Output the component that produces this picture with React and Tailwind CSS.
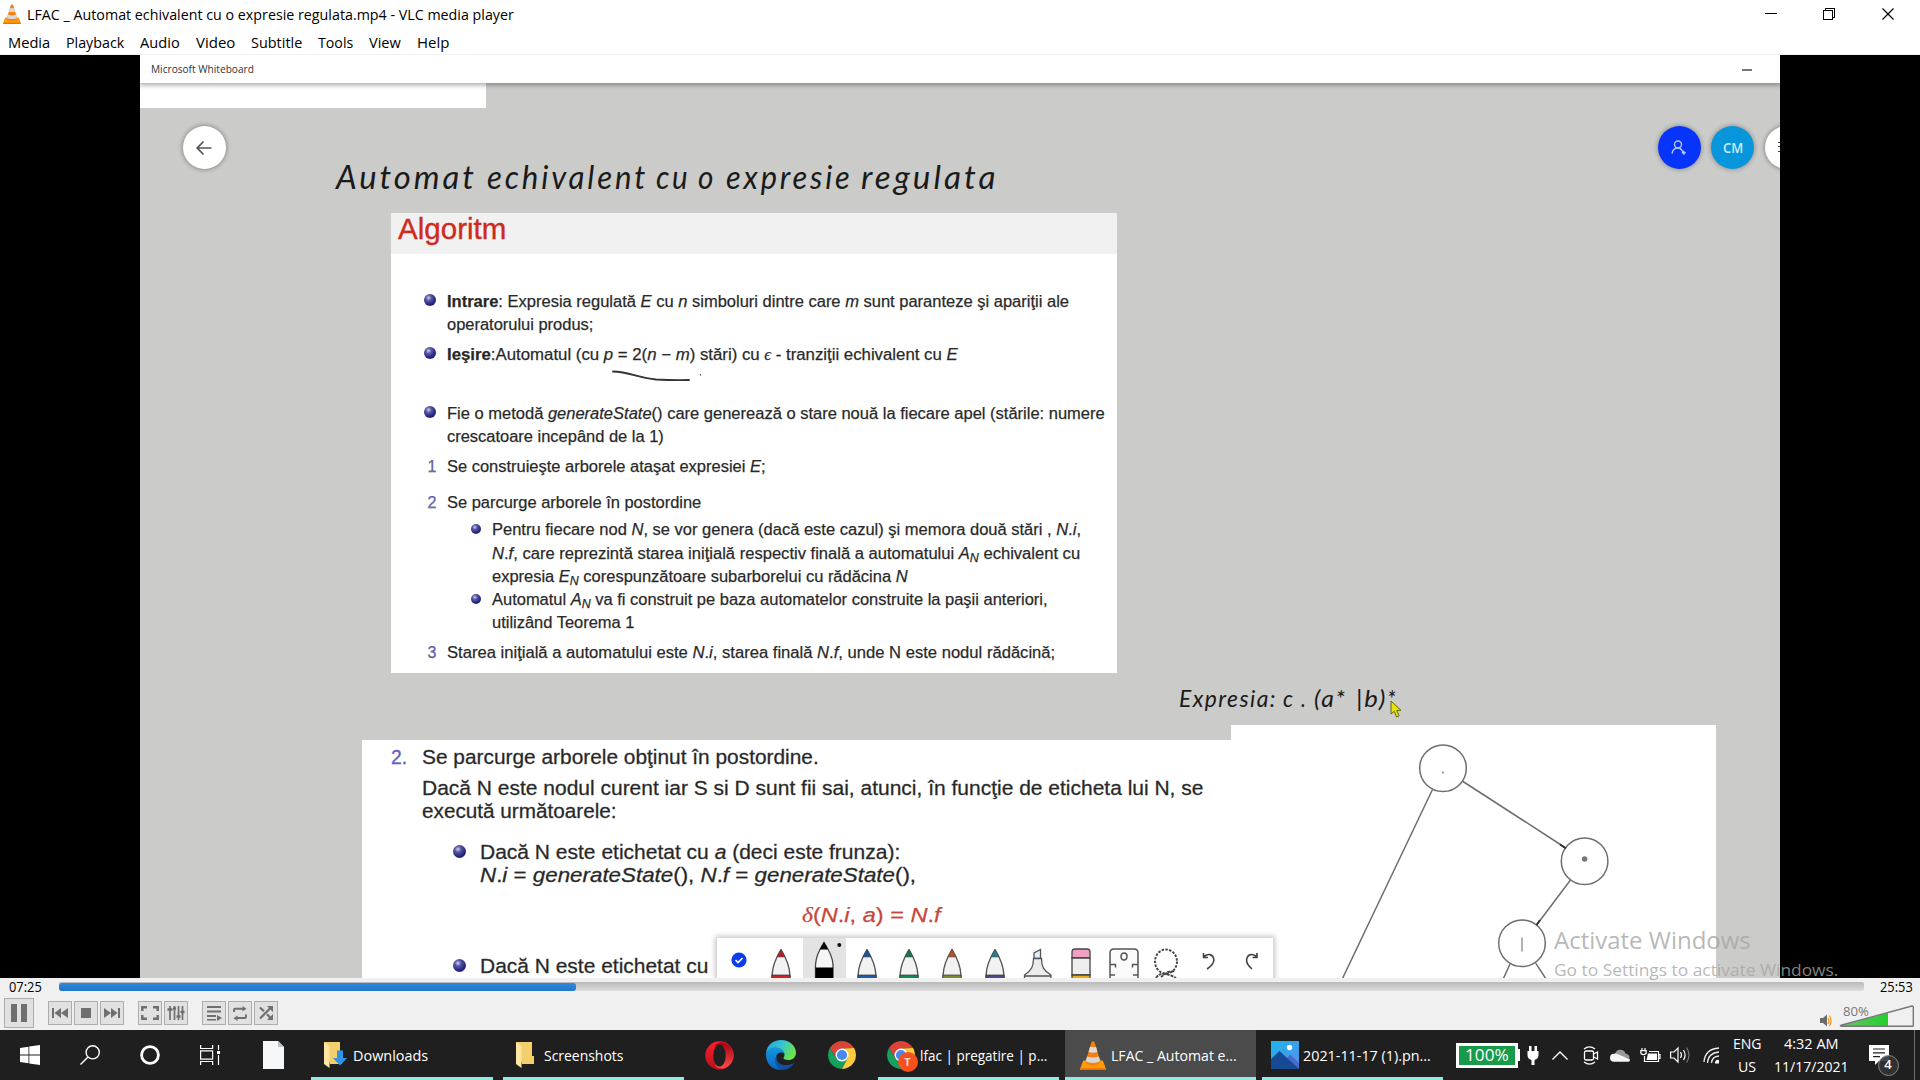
import React, { useLayoutEffect, useRef, useState } from "react";

/* Text on one line, condensed or widened so that it fills exactly w pixels. */
function Fit({ w, className = "", children }) {
  const ref = useRef(null);
  const [k, setK] = useState(1);
  useLayoutEffect(() => {
    if (ref.current) setK(w / ref.current.offsetWidth);
  }, [w]);
  return (
    <span className={"block shrink-0 whitespace-nowrap " + className} style={{ width: w }}>
      <span ref={ref} className="inline-block origin-left" style={{ transform: `scaleX(${k})` }}>
        {children}
      </span>
    </span>
  );
}

function Cone({ className }) {
  return (
    <svg viewBox="0 0 26 29" className={className} preserveAspectRatio="none">
      <path d="M3.2 19.5h19.6L26 28a1 1 0 0 1-1 1H1a1 1 0 0 1-1-1z" fill="#ff9a0a" />
      <path d="M0 27.2h26V28a1 1 0 0 1-1 1H1a1 1 0 0 1-1-1z" fill="#e87400" />
      <path d="M5.4 21 11.4 1.4Q13-.8 14.6 1.4L20.6 21q-3 3.4-7.6 3.4T5.4 21z" fill="#f57f10" />
      <path d="M10 6h6l1.500 5q-4.500 1.600-9 0z" fill="#dcdcdc" />
      <path d="M7.1 15.400q5.900 2.200 11.800 0l1.400 4.800q-7.300 3.400-14.600 0z" fill="#d8d8d8" />
    </svg>
  );
}

const menus = [
  ["Media", 42, 16],
  ["Playback", 58, 16],
  ["Audio", 40, 16],
  ["Video", 39, 16],
  ["Subtitle", 51, 16],
  ["Tools", 35, 16],
  ["View", 32, 16],
  ["Help", 32, 0],
];

function TitleBar() {
  return (
    <header className="h-[55px] shrink-0 border-b border-[#f0f0f0] bg-white font-['Open_Sans',sans-serif] text-[15px] text-black">
      <div className="flex h-[30px] items-start">
        <Cone className="ml-[3px] mt-[4px] h-[20px] w-[18px]" />
        <Fit w={487} className="ml-[6px] leading-[29px]">LFAC _ Automat echivalent cu o expresie regulata.mp4 - VLC media player</Fit>
        <div className="ml-auto flex pt-[7px]">
          <svg width="130" height="14" viewBox="0 0 130 14" fill="none" stroke="#000" shapeRendering="crispEdges">
            <path d="M0 6.500h12" />
            <path d="M58.500 3.500h9v9h-9zM60.500 3.500v-2h9v9h-2" />
            <path d="m117.500 1.500 11 11m0-11-11 11" shapeRendering="auto" strokeWidth="1.200" />
          </svg>
          <div className="w-[25px]" />
        </div>
      </div>
      <nav className="flex pl-[8px] leading-[25px]">
        {menus.map(([t, w, g]) => (
          <div key={t} className="flex">
            <Fit w={w}>{t}</Fit>
            <div style={{ width: g }} />
          </div>
        ))}
      </nav>
    </header>
  );
}

function Bullet({ small }) {
  return (
    <span
      className={
        (small ? "h-[10px] w-[10px] ml-[80px] mr-[11px] mt-[6px] " : "h-[12px] w-[12px] ml-[33px] mr-[11px] mt-[4px] ") +
        "block shrink-0 rounded-full bg-[radial-gradient(circle_at_38%_32%,#d0d0f0_0%,#5a5aa8_25%,#26267e_60%,#1b1b66_100%)]"
      }
    />
  );
}

function Num({ children }) {
  return <span className="ml-[36.500px] block w-[19.500px] shrink-0 text-[16px] text-[#6a6ad0]">{children}</span>;
}

function Sub({ children }) {
  return <span className="relative top-[3px] text-[12px] italic leading-[0px]">{children}</span>;
}

function AlgorithmSlide() {
  return (
    <section className="absolute left-[251px] top-[158px] h-[460px] w-[726px] bg-white font-['Liberation_Sans',sans-serif] text-[16px] leading-[23px] text-[#262626] [-webkit-text-stroke:0.25px_#3a3a3a]">
      <div className="h-[41px] bg-[#f1f1f1] pl-[7px] text-[29px] leading-[32px] text-[#cf2a1d] [-webkit-text-stroke:0.35px_#cf2a1d]">
        <Fit w={108}>Algoritm</Fit>
      </div>
      <div className="mt-[35.500px] flex">
        <Bullet />
        <Fit w={622}><b>Intrare</b>: Expresia regulată <i>E</i> cu <i>n</i> simboluri dintre care <i>m</i> sunt paranteze şi apariţii ale</Fit>
      </div>
      <Fit w={146} className="ml-[56px]">operatorului produs;</Fit>
      <div className="mt-[7px] flex">
        <Bullet />
        <Fit w={511}><b>Ieşire</b>:Automatul (cu <i>p</i> = 2(<i>n</i> − <i>m</i>) stări) cu <i className="font-['Liberation_Serif',serif]">ϵ</i> - tranziţii echivalent cu <i>E</i></Fit>
      </div>
      <div className="mt-[36.500px] flex">
        <Bullet />
        <Fit w={658}>Fie o metodă <i>generateState</i>() care generează o stare nouă la fiecare apel (stările: numere</Fit>
      </div>
      <Fit w={217} className="ml-[56px]">crescatoare incepând de la 1)</Fit>
      <div className="mt-[7px] flex"><Num>1</Num><Fit w={319}>Se construieşte arborele ataşat expresiei <i>E</i>;</Fit></div>
      <div className="mt-[13px] flex"><Num>2</Num><Fit w={254}>Se parcurge arborele în postordine</Fit></div>
      <div className="mt-[3.500px] flex h-[24px]">
        <Bullet small />
        <Fit w={589}>Pentru fiecare nod <i>N</i>, se vor genera (dacă este cazul) şi memora două stări , <i>N</i>.<i>i</i>,</Fit>
      </div>
      <Fit w={588} className="ml-[101px] h-[23.500px]"><i>N</i>.<i>f</i>, care reprezintă starea iniţială respectiv finală a automatului <i>A</i><Sub>N</Sub> echivalent cu</Fit>
      <Fit w={416} className="ml-[101px] h-[23px]">expresia <i>E</i><Sub>N</Sub> corespunzătoare subarborelui cu rădăcina <i>N</i></Fit>
      <div className="flex h-[23px]">
        <Bullet small />
        <Fit w={556}>Automatul <i>A</i><Sub>N</Sub> va fi construit pe baza automatelor construite la paşii anteriori,</Fit>
      </div>
      <Fit w={142} className="ml-[101px]">utilizând Teorema 1</Fit>
      <div className="mt-[7px] flex"><Num>3</Num><Fit w={608}>Starea iniţială a automatului este <i>N</i>.<i>i</i>, starea finală <i>N</i>.<i>f</i>, unde N este nodul rădăcină;</Fit></div>
    </section>
  );
}

function BigBullet() {
  return (
    <span className="ml-[91px] mr-[14px] mt-[5px] block h-[13px] w-[13px] shrink-0 rounded-full bg-[radial-gradient(circle_at_38%_32%,#d0d0f0_0%,#5a5aa8_25%,#26267e_60%,#1b1b66_100%)]" />
  );
}

function PostorderSlide() {
  return (
    <section className="absolute left-[221.500px] top-[685px] h-[238px] w-[870px] overflow-hidden bg-white pt-[5px] font-['Liberation_Sans',sans-serif] text-[20.500px] leading-[23px] text-[#262626] [-webkit-text-stroke:0.3px_#3a3a3a]">
      <div className="flex">
        <Fit w={16} className="ml-[29.500px] text-[#5c5ccb] [-webkit-text-stroke:0.3px_#5c5ccb]">2.</Fit>
        <Fit w={397} className="ml-[15px]">Se parcurge arborele obţinut în postordine.</Fit>
      </div>
      <Fit w={781} className="ml-[60.500px] mt-[7.500px]">Dacă N este nodul curent iar S si D sunt fii sai, atunci, în funcţie de eticheta lui N, se</Fit>
      <Fit w={195} className="ml-[60.500px]">execută următoarele:</Fit>
      <div className="mt-[18px] flex">
        <BigBullet />
        <Fit w={420}>Dacă N este etichetat cu <i>a</i> (deci este frunza):</Fit>
      </div>
      <Fit w={436} className="ml-[118px]"><i>N</i>.<i>i</i> = <i>generateState</i>(), <i>N</i>.<i>f</i> = <i>generateState</i>(),</Fit>
      <Fit w={139} className="ml-[440px] mt-[17.500px] text-[#c8463a] [-webkit-text-stroke:0.25px_#c8463a]"><i className="font-['Liberation_Serif',serif]">δ</i>(<i>N</i>.<i>i</i>, <i>a</i>) = <i>N</i>.<i>f</i></Fit>
      <div className="mt-[27px] flex">
        <BigBullet />
        <Fit w={228}>Dacă N este etichetat cu</Fit>
      </div>
    </section>
  );
}

function TreeSlide() {
  return (
    <section className="absolute left-[1091px] top-[669.500px] h-[254px] w-[485px] overflow-hidden bg-white">
      <svg width="485" height="254" viewBox="1231 724.500 485 254" fill="none" stroke="#6e6e6e" strokeWidth="1.500">
        <circle cx="1443" cy="767.700" r="23.300" />
        <circle cx="1584.600" cy="860.700" r="23.300" />
        <circle cx="1522" cy="942.700" r="23.300" />
        <path d="M1432.500 789 1342 979M1463 781l102 66M1570.500 879.500 1537 924M1510 963.500l-7 15.500M1535.700 962.700l10.500 16" />
        <path d="m1560 844 6 4M1540 919.500l-3.500 5" stroke="#333" strokeWidth="1.900" />
        <path d="M1522 937v14" stroke="#999" />
        <circle cx="1443" cy="772" r="0.900" fill="#777" stroke="none" />
        <circle cx="1584.600" cy="858.500" r="2.800" fill="#777" stroke="none" />
      </svg>
    </section>
  );
}

function Pen({ tip, band }) {
  return (
    <svg width="20" height="30" viewBox="0 0 20 30" className="block">
      <path d="M10 .5C6 7 1.500 15 1 26.500V30h18v-3.500C18.500 15 14 7 10 .5z" fill="#f2f2f2" stroke="#555" strokeWidth="1.400" />
      <path d="M10 .5c-1.400 2.400-2.700 4.800-3.800 7.500h7.600C12.700 5.300 11.400 2.900 10 .5z" fill={tip} stroke="#444" strokeWidth=".5" />
      <path d="M1 26h18v4H1z" fill={band} stroke="#333" strokeWidth=".7" />
    </svg>
  );
}

function InkToolbar() {
  return (
    <div className="absolute left-[577px] top-[883px] flex h-[42px] w-[556px] bg-white pl-[13.500px] shadow-[0_0_5px_2px_rgba(0,0,0,0.22)]">
      <svg width="16" height="16" viewBox="0 0 16 16" className="mt-[14px]">
        <circle cx="8" cy="8" r="7.600" fill="#0b3cf0" />
        <path d="m4.500 8 2.500 2.600L11.500 6" fill="none" stroke="#fff" strokeWidth="1.600" />
      </svg>
      <div className="ml-[24.500px] mt-[11px]"><Pen tip="#b3202a" band="#d02424" /></div>
      <div className="ml-[11.500px] h-full w-[43px] bg-[#e3e3e3]">
        <svg width="43" height="42" viewBox="0 0 43 42">
          <path d="M21 4.500c-4 6-8 14-8.500 22V42h17.500V26.500C29.500 18.500 25 10.500 21 4.500z" fill="#f5f5f5" stroke="#444" strokeWidth="1.300" />
          <path d="M21 4c-1.800 2.600-3 5-4 7.500h8c-1-2.500-2.200-4.900-4-7.500zM12.500 29.500H30V42H12.500z" fill="#000" />
          <circle cx="36.300" cy="7" r="2" fill="#111" />
        </svg>
      </div>
      <div className="ml-[11px] mt-[11px]"><Pen tip="#1c549c" band="#1b5cb0" /></div>
      <div className="ml-[22.500px] mt-[11px]"><Pen tip="#10784a" band="#118a52" /></div>
      <div className="ml-[23px] mt-[11px]"><Pen tip="#b8502c" band="#7a8a2c" /></div>
      <div className="ml-[22.500px] mt-[11px]"><Pen tip="#23808e" band="#4a4a8c" /></div>
      <svg width="30" height="31" viewBox="0 0 30 31" className="ml-[18px] mt-[10px]" fill="#ececec" stroke="#555" strokeWidth="1.300">
        <path d="M11 10.500V5l6.500-3.500v9z" fill="#dff0fa" />
        <path d="M10.500 10.500h8c0 8 2 12 9.500 16.500v4H1.500v-4C8.500 22.500 10.500 18.500 10.500 10.500zM1.500 28h27" />
      </svg>
      <svg width="20" height="31" viewBox="0 0 20 31" className="ml-[18px] mt-[10px]" stroke="#444" strokeWidth="1.300">
        <path d="M1 10V4q0-3 3-3h12q3 0 3 3v6z" fill="#f0a0c4" />
        <path d="M1 10h18v17H1z" fill="#eee" />
        <path d="M1 27h18v4H1z" fill="#eab010" />
      </svg>
      <svg width="30" height="31" viewBox="0 0 30 31" className="ml-[18px] mt-[10px]" fill="none" stroke="#555" strokeWidth="1.500">
        <path d="M1 31V5q0-4 4-4h20q4 0 4 4v26M1 16.500h6M1 27h5M29 16.500h-6M29 27h-5M6.500 16.500v3M23.500 16.500v3" fill="#fafafa" />
        <ellipse cx="15" cy="8.500" rx="3" ry="3.400" />
      </svg>
      <svg width="26" height="31" viewBox="0 0 26 31" className="ml-[14px] mt-[10px]" fill="none" stroke="#444" strokeWidth="1.900">
        <ellipse cx="13" cy="13.500" rx="11" ry="12" strokeDasharray="2.500 1.300" />
        <path d="M3 30q3-5 9-4t11 4M8 29l7-5 7-1" strokeDasharray="3 1" />
      </svg>
      <svg width="14" height="18" viewBox="0 0 14 18" className="ml-[23.500px] mt-[14px]" fill="none" stroke="#444" strokeWidth="1.600">
        <path d="M5 17c6-4 7.500-8 6.500-11-1.200-4-5.500-4.600-9.500-1.500M1.500 1v4.500H6" />
      </svg>
      <svg width="14" height="18" viewBox="0 0 14 18" className="ml-[28.500px] mt-[14px]" fill="none" stroke="#444" strokeWidth="1.600">
        <path d="M7 17C2 13 1 9 2 6c1.200-4 5.500-4.600 9.500-1.500M12 1v4.500H7.500" />
      </svg>
    </div>
  );
}

function Hand({ words, size, className }) {
  return (
    <div className={"absolute flex font-['Lato',sans-serif] italic text-[#1a1a1a] " + size + " " + className}>
      {words.map(([t, w, g], i) => (
        <div key={i} className="flex">
          <Fit w={w}>{t}</Fit>
          <div style={{ width: g }} />
        </div>
      ))}
    </div>
  );
}

function Whiteboard() {
  return (
    <div className="relative h-[923px] w-[1640px] overflow-hidden bg-[#cbcbc9]">
      <div className="absolute left-0 top-0 h-[53px] w-[346px] bg-white" />
      <div className="relative flex h-[28px] items-center bg-white font-['Open_Sans',sans-serif] text-[11px] font-medium text-[#333] shadow-[0_1px_5px_1px_rgba(0,0,0,0.35)]">
        <Fit w={103} className="ml-[10.500px] leading-[28px]">Microsoft Whiteboard</Fit>
        <div className="ml-auto mr-[28px] mt-px h-[2px] w-[10px] bg-[#777]" />
      </div>

      <div className="absolute left-[42.500px] top-[71px] flex h-[43px] w-[43px] items-center justify-center rounded-full bg-white shadow-[0_0_4px_1px_rgba(0,0,0,0.3)]">
        <svg width="16" height="16" viewBox="0 0 16 16" fill="none" stroke="#555" strokeWidth="1.700"><path d="M15.500 8H1.500M7.500 1.500 1.200 8l6.300 6.500" /></svg>
      </div>
      <div className="absolute left-[1517.500px] top-[71px] flex h-[43px] w-[43px] items-center justify-center rounded-full bg-[#0734fb] shadow-[0_0_4px_1px_rgba(0,0,0,0.25)]">
        <svg width="16" height="16" viewBox="0 0 16 16" fill="none" stroke="#b4c6ff" strokeWidth="1.400"><circle cx="7" cy="4.500" r="3.500" /><path d="M1 13.500Q2 8 7 8q3 0 5 4M10.800 12.700h4M12.800 10.700v4" /></svg>
      </div>
      <div className="absolute left-[1571px] top-[71px] flex h-[43px] w-[43px] items-center justify-center rounded-full bg-[#0795dc] font-['Open_Sans',sans-serif] text-[15px] font-semibold text-[#c9edff] shadow-[0_0_4px_1px_rgba(0,0,0,0.25)]"><Fit w={20}>CM</Fit></div>
      <div className="absolute left-[1624.500px] top-[71px] h-[43px] w-[43px] rounded-full bg-white pl-[13.500px] pt-[16px] shadow-[0_0_4px_1px_rgba(0,0,0,0.3)]">
        <div className="h-[10px] w-[14px] border-y-[1.500px] border-[#444] pt-[2.700px]"><div className="h-[1.500px] bg-[#444]" /></div>
      </div>

      <Hand
        className="left-[196px] top-[99px]"
        size="text-[33px] leading-[44px] tracking-[3px]"
        words={[["Automat", 141, 10], ["echivalent", 161, 8], ["cu", 34, 8], ["o", 18, 10], ["expresie", 127, 8], ["regulata", 137, 0]]}
      />
      <AlgorithmSlide />
      <svg width="92" height="14" viewBox="0 0 92 14" className="absolute left-[471px] top-[314px]" fill="none" stroke="#333" strokeWidth="1.800" strokeLinecap="round">
        <path d="M2 2.500C18 3 28 9 45 10.500q16 .8 33 .5" />
        <path d="M89.500 5.500v.5" strokeWidth="1.200" />
      </svg>
      <Hand
        className="left-[1039px] top-[627.500px]"
        size="text-[24px] leading-[30px] tracking-[1.500px]"
        words={[["Expresia:", 98, 6], ["c", 11, 7], [".", 6, 7], ["(a*", 33, 9], ["|b)", 31, 0], ["*", 10, 0]]}
      />
      <PostorderSlide />
      <TreeSlide />
      <svg width="12" height="18" viewBox="0 0 12 18" className="absolute left-[1250px] top-[645px]"><path d="M1 1v13l3.200-2.800L6.500 17l2.600-1.200-2.400-5.400H11z" fill="#e8e400" stroke="#5a5a00" strokeWidth=".9" /></svg>
      <InkToolbar />
    </div>
  );
}

function Btn({ children, className = "" }) {
  return <button className={"flex h-[24px] w-[24px] items-center justify-center border border-[#adadad] bg-[#e1e1e1] " + className}>{children}</button>;
}

const g = "#6f6f6f";

function Controls() {
  return (
    <div className="h-[52px] shrink-0 bg-[#f0f0f0] font-['Open_Sans',sans-serif] text-[14px] text-black">
      <div className="flex h-[20px]">
        <Fit w={33} className="ml-[9px] leading-[18px]">07:25</Fit>
        <div className="ml-[17px] mt-[4px] h-[9px] w-[1805px] rounded-[2px] bg-linear-to-b from-[#b9b9b9] to-[#dedede] pt-px">
          <div className="h-[8px] w-[517px] rounded-[3px] bg-linear-to-b from-[#3089dc] to-[#2176c9]" />
        </div>
        <Fit w={33} className="ml-[16px] leading-[18px]">25:53</Fit>
      </div>
      <div className="flex h-[30px] items-center pl-[4px]">
        <Btn className="mr-[14px] h-[30px]! w-[30px]!">
          <svg width="16" height="18" viewBox="0 0 16 18" fill={g}><path d="M0 0h6v18H0zM10 0h6v18h-6z" /></svg>
        </Btn>
        <Btn className="mr-[2px]"><svg width="16" height="10" viewBox="0 0 16 10" fill={g}><path d="M0 0h2v10H0zM9 0v10L2.500 5zM16 0v10L9 5z" /></svg></Btn>
        <Btn className="mr-[2px]"><svg width="10" height="10" viewBox="0 0 10 10" fill={g}><path d="M0 0h10v10H0z" /></svg></Btn>
        <Btn className="mr-[14px]"><svg width="16" height="10" viewBox="0 0 16 10" fill={g}><path d="M14 0h2v10h-2zM7 0v10l6.500-5zM0 0v10l7-5z" /></svg></Btn>
        <Btn className="mr-[2px]"><svg width="18" height="14" viewBox="0 0 18 14" fill="none" stroke={g} strokeWidth="2.500"><path d="M1.300 5V1.300H6M12 1.300h4.700V5M16.700 9v3.700H12M6 12.700H1.300V9" /></svg></Btn>
        <Btn className="mr-[14px]"><svg width="18" height="14" viewBox="0 0 18 14" fill="none" stroke={g}><path d="M3 0v14M7.500 0v14M11.500 0v14M15.500 0v14" strokeWidth="1.700" /><path d="M.5 3.500h5M9.500 10.500h4M13.500 6h4M6 2.500h3" strokeWidth="2.500" /></svg></Btn>
        <Btn className="mr-[2px]"><svg width="15" height="15" viewBox="0 0 15 15" fill={g}><path d="M0 0h14v2H0zM0 4.500h14v2H0zM0 9h9v2H0zM0 13h9v1.500H0zM10 9l5 3-5 3z" /></svg></Btn>
        <Btn className="mr-[2px]"><svg width="14" height="15" viewBox="0 0 14 15" fill="none" stroke={g} strokeWidth="2"><path d="M1 6V4q0-1.200 1.200-1.200H10M13 8.500v2.300q0 1.200-1.200 1.200H4" /><path d="m9.500 0 4 2.800-4 2.800zM4.500 9.400.5 12.200l4 2.800z" fill={g} stroke="none" /></svg></Btn>
        <Btn><svg width="14" height="14" viewBox="0 0 14 14" fill="none" stroke={g} strokeWidth="2.200"><path d="m1 1.500 4 3.800M1 12.500 11.500 2M8 8.200l3.500 3.800" /><path d="M8 0h6v6zM8 14h6V8z" fill={g} stroke="none" /></svg></Btn>
        <svg width="96" height="30" viewBox="1818 998 96 30" className="ml-auto mr-[6px]">
          <defs><linearGradient id="vol"><stop offset="0" stopColor="#6cc46c" /><stop offset="1" stopColor="#24cf2e" /></linearGradient></defs>
          <path d="M1820 1018h3l4-3.500v12l-4-3.500h-3z" fill="#6a6a6a" />
          <path d="M1828 1018q1.700 3 0 6M1829.500 1015.500q3 5.300 0 10.500" fill="none" stroke="#f39a2a" strokeWidth="1.300" />
          <path d="M1841 1025.500 1888 1013v13.500h-47z" fill="url(#vol)" />
          <path d="M1841 1025.300 1912 1006q1.300 0 1.300 1.300v18.200q0 .8-.8.8H1842q-2.500-.2-1-1z" fill="none" stroke="#777" strokeWidth="1.400" />
          <text x="1843" y="1016" textLength="26" lengthAdjust="spacingAndGlyphs" fontSize="12" fill="#777" fontFamily="Open Sans">80%</text>
        </svg>
      </div>
    </div>
  );
}

function Chrome() {
  return (
    <svg viewBox="-14 -14 28 28" className="h-[28px] w-[28px] shrink-0">
      <path d="M-12.120 -7A14 14 0 0 1 12.120 -7L0 -6.500-5.600 3.200z" fill="#dc4437" />
      <path d="M-12.120 -7A14 14 0 0 0 0 14L6 3-5.600 3.250z" fill="#17a05d" />
      <path d="M12.120 -7A14 14 0 0 1 0 14L5.600 3.250 0 -6.500z" fill="#fdcb3d" />
      <circle r="6.500" fill="#fff" />
      <circle r="5.100" fill="#4788f4" />
    </svg>
  );
}

function Folder({ arrow }) {
  return (
    <svg width="24" height="28" viewBox="0 0 24 28" className="shrink-0">
      <path d="M0 1h16v14l2 0v8H6z" fill="#f5cf6c" />
      <path d="M0 1l5.500 4v22L0 23z" fill="#ffe7a3" />
      {arrow && <path d="M13 9.500h6V17h4l-7 7.500L9 17h4z" fill="#2f93ea" />}
    </svg>
  );
}

function Task({ className, active, label, w, children }) {
  return (
    <div className={"flex h-[50px] shrink-0 items-center border-b-[3px] border-[#8eebdd] pt-[3px] " + (active ? "bg-[#4b4b4b] " : "") + className}>
      {children}
      <Fit w={w} className="leading-[44px]">{label}</Fit>
    </div>
  );
}

function Taskbar() {
  return (
    <footer className="flex h-[50px] shrink-0 items-center bg-[#1f1f1f] font-['Open_Sans',sans-serif] text-[15px] text-white">
      <svg width="20" height="20" viewBox="0 0 20 20" className="ml-[20px]" fill="#fff"><path d="M0 3 8.500 1.800v7.700H0zM9.300 1.600 20 0v9.500H9.300zM0 10.500h8.500v7.800L0 17zM9.300 10.500H20V20L9.300 18.400z" /></svg>
      <svg width="20" height="20" viewBox="0 0 20 20" className="ml-[40px]" fill="none" stroke="#fff" strokeWidth="1.400"><circle cx="12.700" cy="7.300" r="6.600" /><path d="M8 12 .5 19.500" /></svg>
      <svg width="20" height="20" viewBox="0 0 20 20" className="ml-[40px]" fill="none" stroke="#fff" strokeWidth="2.800"><circle cx="10" cy="10" r="8.400" /></svg>
      <svg width="20" height="20" viewBox="0 0 20 20" className="ml-[40px]" fill="none" stroke="#fff" strokeWidth="1.200"><path d="M.6 0v3.500h12V0M.6 20v-3.500h12V20M.6 5.800h12v8.400H.6zM18.500 0v5M18.500 10v10" /><path d="M17 6h3v3h-3z" fill="#fff" stroke="none" /></svg>
      <svg width="21" height="28" viewBox="0 0 21 28" className="ml-[43px]"><path d="M0 0h15l6 6v22H0z" fill="#f6f7f9" /><path d="M15 0v6h6z" fill="#bfc3c7" /></svg>

      <Task className="ml-[27px] w-[182px] pl-[13px]" label="Downloads" w={75}><Folder arrow /><div className="w-[4.500px]" /></Task>
      <Task className="ml-[10px] w-[181px] pl-[13px]" label="Screenshots" w={79}><Folder /><div className="w-[4px]" /></Task>

      <svg width="29" height="29" viewBox="0 0 29 29" className="ml-[21px]">
        <defs>
          <linearGradient id="op1" x2="0" y2="1"><stop offset="0" stopColor="#ff1b2d" /><stop offset="1" stopColor="#b5121c" /></linearGradient>
          <linearGradient id="op2" x2="0" y2="1"><stop offset="0" stopColor="#a00010" /><stop offset="1" stopColor="#ff4b4b" /></linearGradient>
        </defs>
        <circle cx="14.500" cy="14.500" r="14.200" fill="url(#op1)" />
        <path d="M9.500 5Q14-.3 20 2q8.700 4 8.700 12.500T20 27q-6 2-10.500-3 8 2 9-9.500T9.500 5z" fill="url(#op2)" />
        <ellipse cx="14.500" cy="14.500" rx="6.200" ry="11" fill="#1f1f1f" />
      </svg>
      <svg width="30" height="30" viewBox="0 0 30 30" className="ml-[31.500px]">
        <defs>
          <linearGradient id="ed1" x1="0" x2="1" y2=".4"><stop offset=".1" stopColor="#24a5e0" /><stop offset=".55" stopColor="#36c6cf" /><stop offset="1" stopColor="#6ae34c" /></linearGradient>
          <linearGradient id="ed2" x2="0" y2="1"><stop offset="0" stopColor="#1598dc" /><stop offset="1" stopColor="#0a66c8" /></linearGradient>
        </defs>
        <path d="M0 13C1 5 7 0 15 0c9 0 15 6.300 15 12.500 0 5-3.500 7.500-7.500 7.500-3.500 0-5.500-1.200-5-2.300 2.500-3.200.5-8-5-8.700C7 8.500 2.500 9.500 0 13z" fill="url(#ed1)" />
        <path d="M0 14.500C.5 9.500 6 6.800 11 7.400c4 .5 7 3 7.200 6C14 11 9.500 14 10 19c.4 5 4.500 9.500 9 10C8 32 0 25 0 14.500z" fill="url(#ed2)" />
        <path d="M11.500 14.500c-2.500 4.500.5 9 5 10.200 4 1 8 0 11.500-1.700C25 28 20.500 30 16.500 29.900 9 28.500 7 19 11.500 14.500z" fill="#124f9e" />
      </svg>
      <div className="ml-[32px]"><Chrome /></div>

      <Task className="ml-[22px] w-[181px] pl-[9px]" label="lfac | pregatire | p..." w={127}>
        <div className="relative mr-[5px]">
          <Chrome />
          <div className="absolute left-[11px] top-[11px] flex h-[20px] w-[20px] items-center justify-center rounded-full bg-[#f4511e] text-[11px] font-bold text-[#ffd9cc]">T</div>
        </div>
      </Task>
      <Task active className="ml-[6px] w-[191px] pl-[15px]" label="LFAC _ Automat e..." w={126}><Cone className="mr-[5.500px] h-[29px] w-[26px] shrink-0" /></Task>
      <Task className="ml-[6px] w-[181px] pl-[9px]" label="2021-11-17 (1).pn..." w={128}>
        <svg width="28" height="28" viewBox="0 0 28 28" className="mr-[4.500px] shrink-0">
          <defs><linearGradient id="ph" x2="1" y2="1"><stop offset="0" stopColor="#19b5ec" /><stop offset="1" stopColor="#5a8ee8" /></linearGradient></defs>
          <path d="M0 0h28v28H0z" fill="url(#ph)" />
          <path d="m12 22 7-8.500L28 22v6H14z" fill="#4a68cc" />
          <path d="m0 18 8.500-8L28 28H0z" fill="#164a92" />
          <circle cx="18.500" cy="6.500" r="2.700" fill="#fff" />
        </svg>
      </Task>

      <div className="ml-[13px] flex h-[25px] w-[62px] items-center border-[3px] border-white bg-[#179a49] text-[16px]">
        <Fit w={44} className="ml-[6px] leading-[20px]">100%</Fit>
      </div>
      <div className="h-[12px] w-[2px] bg-white" />
      <svg width="12" height="19" viewBox="0 0 12 19" className="ml-[7px]" fill="#fff"><path d="M2 0h2.500v5h3V0H10v5h1.500v4q0 4-4 5v5h-3v-5q-4-1-4-5V5H2z" /></svg>
      <svg width="16" height="9" viewBox="0 0 16 9" className="ml-[13px]" fill="none" stroke="#fff" strokeWidth="1.400"><path d="m.5 8.500 7.500-7.500 7.500 7.500" /></svg>
      <svg width="16" height="19" viewBox="0 0 16 19" className="ml-[15px]" fill="none" stroke="#fff" strokeWidth="1.300"><rect x="1.500" y="5" width="9" height="9" rx="1.500" /><path d="m10.500 8 4-2v7l-4-2M1 3Q6.500-1.200 12 3M1 16q5.500 4.200 11 0" /></svg>
      <svg width="20" height="13" viewBox="0 0 20 13" className="ml-[11px]"><path d="M5 5a5.500 5.500 0 0 1 10.500-.5Q19.500 5 19.500 9q-9 0-14.500-4z" fill="#9a9a9a" /><path d="M4 12.800a4 4 0 0 1 0-8Q6 4 8 5.200l9.500 4Q20 9 20 11t-2 1.800z" fill="#f5f5f5" /></svg>
      <svg width="21" height="15" viewBox="0 0 21 15" className="ml-[10px]" fill="none" stroke="#fff" strokeWidth="1.200"><path d="M9 3.500h9.500v10H4.500V8M18.500 6.500h1.500v4h-1.500" /><path d="M8 5.500h9v6.500H6.500z" fill="#fff" stroke="none" /><path d="M2 0v2.500M5 0v2.500M.8 2.600h5.400v2q0 2-2.700 2t-2.700-2z" /></svg>
      <svg width="21" height="18" viewBox="0 0 21 18" className="ml-[9px]" fill="none" stroke="#fff" strokeWidth="1.200"><path d="M.6 6H4l4-4v14l-4-4H.6zM10.500 6q2 3 0 6M13.500 4q3.200 5 0 10" /><path d="M16.500 1.500q5 7.500 0 15" stroke="#777" /></svg>
      <svg width="17" height="17" viewBox="0 0 17 17" className="ml-[12px]" fill="none" stroke="#eee" strokeWidth="1.300"><path d="M1 15Q2 2 16 1M4.500 16Q5 6 16 5M8.500 16Q9 9.500 16 9" /><path d="M12 16.500a3 3 0 0 1 4-3.500v3.500z" fill="#fff" stroke="none" /></svg>
      <div className="ml-[13px] flex flex-col items-center text-[15px] leading-[23px]">
        <Fit w={29}>ENG</Fit>
        <Fit w={18}>US</Fit>
      </div>
      <div className="ml-[12px] flex flex-col items-center leading-[23px]">
        <Fit w={55}>4:32 AM</Fit>
        <Fit w={75}>11/17/2021</Fit>
      </div>
      <div className="relative ml-[20px] h-[20px] w-[20px]">
        <svg width="20" height="20" viewBox="0 0 20 20"><path d="M0 0h20v16H10l-4 4v-4H0z" fill="#fff" /><path d="M4 4h12M4 7.800h12M4 11.600h7" stroke="#1f1f1f" strokeWidth="1.200" /></svg>
        <div className="absolute left-[9px] top-[9.500px] flex h-[21px] w-[21px] items-center justify-center rounded-full border border-[#8a8a8a] bg-[#333]/90 text-[13px] font-semibold">4</div>
      </div>
      <div className="ml-[25px] h-[50px] w-px bg-[#6a6a6a]" />
    </footer>
  );
}

export default function App() {
  return (
    <div className="flex h-[1080px] w-[1920px] flex-col overflow-hidden bg-black">
      <TitleBar />
      <main className="relative flex h-[923px] shrink-0 justify-center bg-black">
        <Whiteboard />
        <div className="absolute left-[1554px] top-[868px] z-10 font-['Open_Sans',sans-serif] text-[#a5a5a5]/80">
          <Fit w={197} className="text-[23px] leading-[34px]">Activate Windows</Fit>
          <Fit w={284} className="text-[16.500px] leading-[26px]">Go to Settings to activate Windows.</Fit>
        </div>
      </main>
      <Controls />
      <Taskbar />
    </div>
  );
}
